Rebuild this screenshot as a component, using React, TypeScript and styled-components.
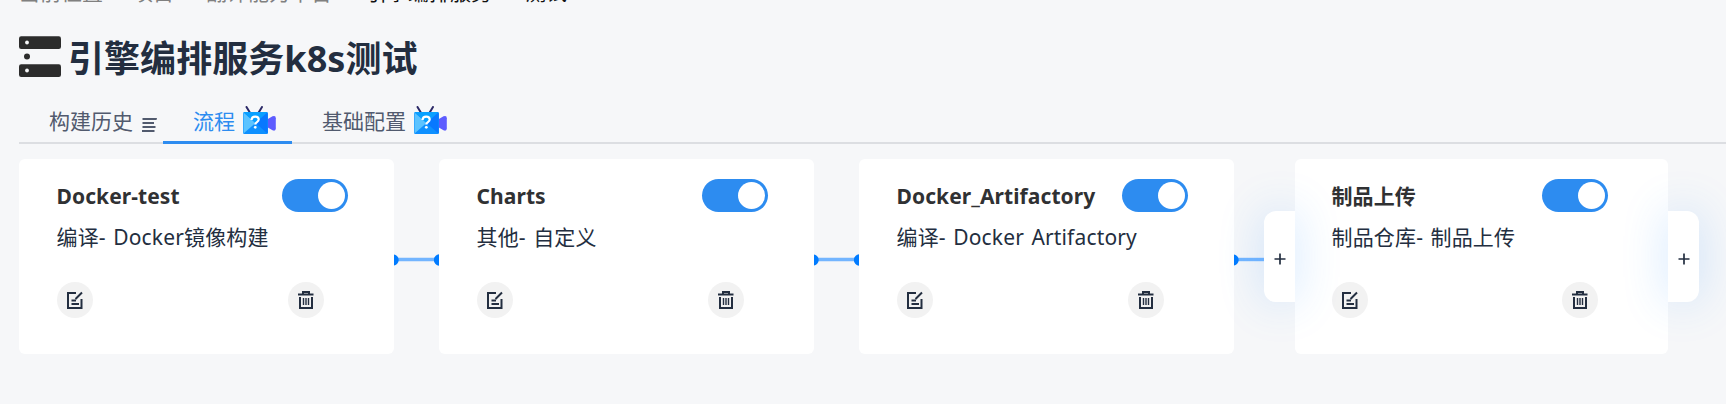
import React from 'react';
import styled, { createGlobalStyle } from 'styled-components';

const GlobalStyle = createGlobalStyle`
  * { box-sizing: border-box; }
  html, body { margin: 0; background: #f6f7f9; overflow: hidden; }
  body { font-family: "Noto Sans", "Noto Sans CJK SC", sans-serif; font-size: 21px; color: #232e40; }
  svg { display: block; flex: none; }
`;

const Page = styled.div`
  width: 100%;
  height: 404px;
  padding-left: 19px;
  overflow: hidden;
  display: flex;
  flex-direction: column;
`;

const Breadcrumb = styled.nav`
  display: flex;
  height: 34px;
  flex: none;
  line-height: 30px;
  margin-top: -23px;
  color: #808080;
  white-space: nowrap;
`;

const Crumb = styled.span<{ $current?: boolean }>`
  color: ${(p) => (p.$current ? '#111' : 'inherit')};
`;

const Separator = styled.span<{ $width: number }>`
  width: ${(p) => p.$width}px;
  text-align: center;
`;

const Header = styled.header`
  display: flex;
  align-items: center;
  gap: 7px;
  height: 64px;
  margin-top: 14px;
  flex: none;
`;

const Title = styled.h1`
  margin: 0;
  padding-top: 3px;
  font-size: 36px;
  line-height: 48px;
  font-weight: 700;
  letter-spacing: 0.05px;
  white-space: nowrap;
`;

const Tabs = styled.div`
  display: flex;
  height: 55px;
  flex: none;
  border-bottom: 2px solid #dcdee2;
`;

const Tab = styled.div<{ $active?: boolean; $width: number }>`
  display: flex;
  align-items: center;
  gap: 8px;
  width: ${(p) => p.$width}px;
  height: 55px;
  padding: 12px 0 0 30px;
  line-height: 30px;
  white-space: nowrap;
  color: ${(p) => (p.$active ? '#2d8cf0' : '#515a6e')};
  border-bottom: 3px solid ${(p) => (p.$active ? '#2d8cf0' : 'transparent')};
`;

const ListGlyph = styled.svg`
  margin-top: 8px;
`;

const CameraGlyph = styled.svg`
  margin-bottom: 2px;
`;

const Flow = styled.main`
  display: flex;
  align-items: center;
  height: 195px;
  margin-top: 15px;
  flex: none;
`;

const Card = styled.section<{ $narrow?: boolean }>`
  display: flex;
  flex-direction: column;
  width: ${(p) => (p.$narrow ? 373 : 375)}px;
  height: 195px;
  flex: none;
  padding: 20px ${(p) => (p.$narrow ? '60px 0 37px' : '46px 0 38px')};
  background: #fff;
  border-radius: 6px;
`;

const CardHead = styled.div`
  display: flex;
  justify-content: space-between;
  height: 33px;
`;

const CardTitle = styled.h2`
  margin: 0 0 0 -0.5px;
  font-size: 21px;
  line-height: 34px;
  font-weight: 700;
  letter-spacing: 0.08px;
  color: #303133;
  white-space: nowrap;
`;

const Toggle = styled.span`
  display: flex;
  justify-content: flex-end;
  width: 66px;
  height: 33px;
  padding: 3px;
  border-radius: 17px;
  background: #2d8cf0;
`;

const Knob = styled.span`
  width: 27px;
  height: 27px;
  border-radius: 50%;
  background: #fff;
`;

const Description = styled.p`
  margin: 10px 0 0 -0.5px;
  line-height: 30px;
  letter-spacing: 0.16px;
  word-spacing: 1.8px;
  white-space: nowrap;
`;

const Actions = styled.div<{ $inset: number }>`
  display: flex;
  justify-content: space-between;
  margin-top: 30px;
  padding-right: ${(p) => p.$inset}px;
`;

const RoundButton = styled.button`
  display: flex;
  align-items: center;
  justify-content: center;
  width: 36px;
  height: 36px;
  padding: 0;
  border: 0;
  border-radius: 50%;
  background: #f2f2f2;
`;

const AddButton = styled.button<{ $side: 'left' | 'right' }>`
  position: relative;
  display: flex;
  align-items: center;
  justify-content: center;
  width: 31px;
  height: 91px;
  padding: 5px 0 0;
  border: 0;
  flex: none;
  background: #fff;
  border-radius: ${(p) => (p.$side === 'left' ? '12px 0 0 12px' : '0 12px 12px 0')};
  box-shadow: 0 0 45px rgba(50, 145, 255, 0.22);
`;

const Link = styled.svg`
  margin-top: 6px;
`;

const ServerIcon = () => (
  <svg width="42" height="42" viewBox="0 0 42 42">
    <rect y="0.3" width="42" height="12.7" rx="2.2" fill="#2c2c2c" />
    <rect y="28.3" width="42" height="12.7" rx="2.2" fill="#2c2c2c" />
    <circle cx="8" cy="6.5" r="1.9" fill="#f6f7f9" />
    <circle cx="8" cy="20.5" r="3" fill="#2c2c2c" />
    <circle cx="8" cy="34.5" r="1.9" fill="#f6f7f9" />
  </svg>
);

const ListIcon = () => (
  <ListGlyph width="16" height="14" viewBox="0 0 16 14" fill="#515a6e">
    <path d="M1.500 0H16l-.5 2h-14zM1.500 4h11.500v2H1.500zM1.500 8h13v2h-13zM1 12h12.500v2H1z" />
  </ListGlyph>
);

const CameraIcon = () => (
  <CameraGlyph width="33" height="28" viewBox="0 0 33 28">
    <path d="M3.500 1 7 6.700M19 1l-3.500 5.700" stroke="#2c2a68" strokeWidth="2" strokeLinecap="round" />
    <path d="M24 13.500 29.500 10.300q3.300-1.300 3.300 2v10q0 3.300-3.300 2L24 21z" fill="#5d5cff" />
    <rect x="0" y="6" width="25" height="22" rx="1.500" fill="#0e90ff" />
    <path d="M.5 6.500 12.500 17 .5 27.500z" fill="#5cc3ff" />
    <path d="M.5 6h24L12.500 17z" fill="#08a0ff" />
    <path d="M24.500 6.500v21L12.500 17z" fill="#0878ff" />
    <path d="M8.500 14c.2-2.300 1.600-3.300 3.700-3.300 2.100 0 3.500 1.100 3.500 2.900 0 2.600-3.400 2.400-3.400 4.800" fill="none" stroke="#fff" strokeWidth="2.200" />
    <circle cx="12.300" cy="21.300" r="1.400" fill="#fff" />
  </CameraGlyph>
);

const EditIcon = () => (
  <svg width="18" height="18" viewBox="0 0 18 18" fill="none" stroke="#232e40" strokeWidth="2">
    <path d="M10 2H2v15h13.500V8" />
    <path d="M16 1.500 9.500 8M5.500 9.500H10M5.500 13H13" />
  </svg>
);

const TrashIcon = () => (
  <svg width="16" height="18" viewBox="0 0 16 18" fill="none" stroke="#232e40">
    <path d="M5 2.500V1h6v1.500M0 3.500h15.500" strokeWidth="2" />
    <path d="M2 6v11h12V6" strokeWidth="2" />
    <path d="M5.500 7v7M8 7v7M10.500 7v7" strokeWidth="1.400" />
  </svg>
);

const PlusIcon = () => (
  <svg width="12" height="12" viewBox="0 0 12 12">
    <path d="M6 .5v11M.5 6h11" stroke="#232e40" strokeWidth="1.700" />
  </svg>
);

const Connector = ({ width, open }: { width: number; open?: boolean }) => (
  <Link width={width} height="12" viewBox={`0 0 ${width} 12`}>
    <path d={`M0 5.500H${width}`} stroke="#73b5ff" strokeWidth="3.400" />
    <circle cx="-1" cy="6" r="5.700" fill="#007bff" />
    {!open && <circle cx={width + 0.5} cy="6" r="5.700" fill="#007bff" />}
  </Link>
);

interface StageProps {
  title: string;
  description: string;
  narrow?: boolean;
}

const Stage = ({ title, description, narrow }: StageProps) => (
  <Card $narrow={narrow}>
    <CardHead>
      <CardTitle>{title}</CardTitle>
      <Toggle role="switch" aria-checked="true">
        <Knob />
      </Toggle>
    </CardHead>
    <Description>{description}</Description>
    <Actions $inset={narrow ? 10 : 24}>
      <RoundButton><EditIcon /></RoundButton>
      <RoundButton><TrashIcon /></RoundButton>
    </Actions>
  </Card>
);

export default function App() {
  return (
    <Page>
      <GlobalStyle />
      <Breadcrumb>
        <Crumb>当前位置</Crumb>
        <Separator $width={29}>&gt;</Separator>
        <Crumb>项目</Crumb>
        <Separator $width={32}>&gt;</Separator>
        <Crumb>翻译能力平台</Crumb>
        <Separator $width={34}>&gt;</Separator>
        <Crumb $current>引擎编排服务k8s测试</Crumb>
      </Breadcrumb>
      <Header>
        <ServerIcon />
        <Title>引擎编排服务k8s测试</Title>
      </Header>
      <Tabs>
        <Tab $width={144}>构建历史<ListIcon /></Tab>
        <Tab $width={129} $active>流程<CameraIcon /></Tab>
        <Tab $width={155}>基础配置<CameraIcon /></Tab>
      </Tabs>
      <Flow>
        <Stage title="Docker-test" description="编译- Docker镜像构建" />
        <Connector width={45} />
        <Stage title="Charts" description="其他- 自定义" />
        <Connector width={45} />
        <Stage title="Docker_Artifactory" description="编译- Docker Artifactory" />
        <Connector width={30} open />
        <AddButton $side="left"><PlusIcon /></AddButton>
        <Stage title="制品上传" description="制品仓库- 制品上传" narrow />
        <AddButton $side="right"><PlusIcon /></AddButton>
      </Flow>
    </Page>
  );
}
